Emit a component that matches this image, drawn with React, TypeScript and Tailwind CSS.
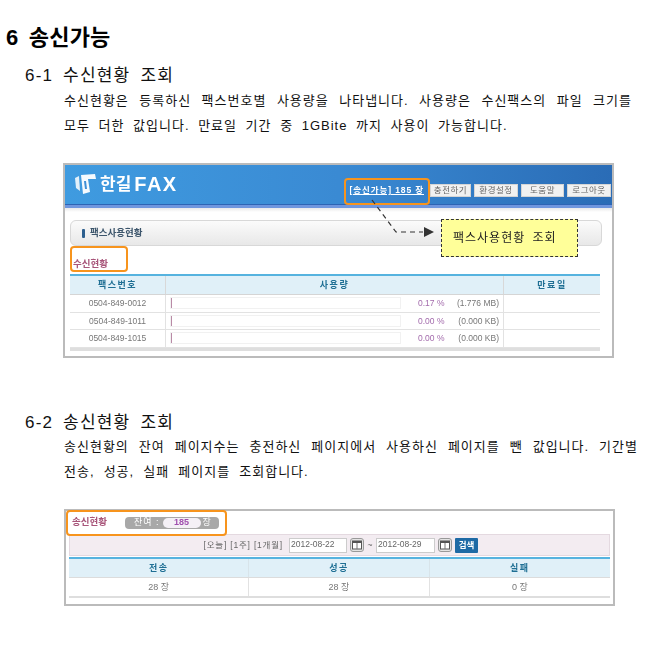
const FONT = "font-['Liberation_Sans','Noto_Sans_CJK_KR',sans-serif]";

const usageRows = [
  { phone: '0504-849-0012', pct: '0.17 %', size: '(1.776 MB)' },
  { phone: '0504-849-1011', pct: '0.00 %', size: '(0.000 KB)' },
  { phone: '0504-849-1015', pct: '0.00 %', size: '(0.000 KB)' },
];

function TopButton({ label, className = '' }: { label: string; className?: string }) {
  return (
    <div className={`h-[13px] bg-[#f1f1f1] border border-[#d5d5d5] flex items-center justify-center text-[8.5px] leading-none text-[#666] tracking-[0.5px] ${className}`}>
      {label}
    </div>
  );
}

function CalendarButton() {
  return (
    <div className="w-[14px] h-[14px] rounded-[3px] border border-[#999] bg-[#e4e4e4] flex items-center justify-center">
      <svg width="10" height="10" viewBox="0 0 10 10">
        <rect x="0.5" y="1" width="9" height="8" fill="#fff" stroke="#555" />
        <rect x="0.5" y="1" width="9" height="2" fill="#555" />
        <path d="M5 3v6" stroke="#777" />
      </svg>
    </div>
  );
}

function Logo() {
  return (
    <div className="flex items-center gap-[3px] text-white">
      <svg width="23" height="22" viewBox="0 0 23 22">
        <path d="M1 5 L5 3 L6 18 L2 15 Z" fill="#fff" opacity="0.85" />
        <path d="M7 2 L21 1 L22 6 L14 6 L16 19 L9 21 Z" fill="#fff" opacity="0.95" />
        <path d="M10 8 L12 8 L13 16 L11 16 Z" fill="#3f8fd6" />
      </svg>
      <span className="text-[17px] font-bold leading-none">한길</span>
      <span className="text-[20px] font-bold leading-none tracking-[1.5px]">FAX</span>
    </div>
  );
}

function ReceiveShot() {
  return (
    <div className="relative ml-[63px] w-[551px] h-[195px] border-[2px] border-[#bbbbbb] bg-white blur-[0.3px]">
      <div className="h-[40px] pt-[19px] pl-[9px] pr-[1px] flex items-start justify-between bg-gradient-to-r from-[#3f9be0] via-[#3a8ad3] to-[#2a6cb6] border-b border-[#2d64b4]">
        <div className="-mt-[11px]"><Logo /></div>
        <div className="flex items-center gap-[3px]">
          <span className="mr-[3px] text-[8.5px] leading-[13px] font-bold text-white underline tracking-[0.9px]">[송신가능] 185 장</span>
          <TopButton label="충전하기" className="w-[41px]" />
          <TopButton label="환경설정" className="w-[44px]" />
          <TopButton label="도움말" className="w-[43px]" />
          <TopButton label="로그아웃" className="w-[44px]" />
        </div>
      </div>
      <div className="h-[3px] bg-[#6f96de]" />
      <div className="h-[4px] bg-gradient-to-b from-[#e9e9e9] to-white" />

      <div className="px-[5px] pt-[8px]">
        <div className="w-[532px] h-[26px] rounded-[6px] border border-[#d8d8d8] bg-gradient-to-b from-[#fbfbfb] to-[#e8e8e8] flex items-center pl-[11px] gap-[5px]">
          <div className="w-[3px] h-[9px] rounded-[1px] bg-[#2d5f8e]" />
          <span className="text-[9.5px] font-bold text-[#3d566c]">팩스사용현황</span>
        </div>
        <div className="h-[28px] pt-[12px] pl-[3px] text-[9.5px] font-bold leading-[12px] text-[#a8557a]">수신현황</div>

        <div className="w-[530px] border-t-[2px] border-[#56b3df] border-b-[3px] border-b-[#dedede] text-[9px]">
          <div className="grid grid-cols-[96px_338px_96px] h-[19px] bg-[#e0f0f8] border-b border-[#d5d5d5] font-bold text-[#1f6f94] text-center leading-[18px] tracking-[1.5px]">
            <div className="border-r border-[#d8d8d8]">팩스번호</div>
            <div className="border-r border-[#d8d8d8]">사용량</div>
            <div>만료일</div>
          </div>
          {usageRows.map((row) => (
            <div key={row.phone} className="grid grid-cols-[96px_338px_96px] h-[17.6px] border-b border-[#e2e2e2] text-[#777] items-stretch">
              <div className="border-r border-[#e2e2e2] flex items-center justify-center text-[8.5px]">{row.phone}</div>
              <div className="border-r border-[#e2e2e2] flex items-center pl-[4px] text-[8.5px]">
                <div className="w-[231px] h-[12px] border border-[#f1f1f1] bg-white">
                  <div className="h-full w-[1px] bg-[#b98aa6]" />
                </div>
                <span className="ml-[17px] text-[#a36bac] whitespace-nowrap">{row.pct}</span>
                <span className="flex-1 pr-[4px] text-right whitespace-nowrap">{row.size}</span>
              </div>
              <div />
            </div>
          ))}
        </div>
      </div>

      {/* 강조 표시 */}
      <div className="absolute left-[279px] top-[13px] w-[86px] h-[27px] rounded-[4px] border-[2px] border-[#f7941d]" />
      <div className="absolute left-[5px] top-[81px] w-[58px] h-[26px] rounded-[4px] border-[2px] border-[#f7941d]" />
      <svg className="absolute left-[300px] top-[32px]" width="80" height="45" viewBox="0 0 80 45">
        <path d="M7 3 L31 35 H58" fill="none" stroke="#333" strokeWidth="1.2" strokeDasharray="5 4" />
        <path d="M59 30 L69 35 L59 40 Z" fill="#333" />
      </svg>
      <div className="absolute left-[376px] top-[54px] w-[137px] h-[38px] border border-dashed border-[#333] bg-[#ffff99] flex items-center pl-[11px] text-[12px] text-[#222] tracking-[1px] [word-spacing:3px]">
        팩스사용현황 조회
      </div>
    </div>
  );
}

function SendShot() {
  return (
    <div className="relative ml-[64px] w-[551px] h-[97px] border-[2px] border-[#bbbbbb] bg-white blur-[0.3px]">
      <div className="h-[23px] pl-[6px] flex items-center gap-[18px]">
        <span className="text-[9.5px] font-bold text-[#a8557a]">송신현황</span>
        <div className="w-[94px] h-[12px] rounded-[4px] bg-[#a8a8a8] flex items-center pl-[9px] text-[9px] text-white">
          <span className="tracking-[1px]">잔여 :</span>
          <span className="ml-[3px] w-[38px] h-[10px] rounded-full bg-[#f4f0f6] flex items-center justify-center text-[9px] leading-none text-[#a04fae] font-bold">185</span>
          <span className="ml-[2px]">장</span>
        </div>
      </div>
      <div className="mx-[3px] h-[22px] bg-[#f3ecf1] border border-[#e4d9e0] flex items-center justify-end pr-[131px] text-[8.5px] text-[#666]">
        <span className="mr-[6px] tracking-[0.8px]">[오늘] [1주] [1개월]</span>
        <div className="w-[58px] h-[15px] bg-white border border-[#ccc] pl-[1px] leading-[11px]">2012-08-22</div>
        <div className="ml-[3px]"><CalendarButton /></div>
        <span className="w-[12px] text-center">~</span>
        <div className="w-[59px] h-[15px] bg-white border border-[#ccc] pl-[1px] leading-[11px]">2012-08-29</div>
        <div className="ml-[3px]"><CalendarButton /></div>
        <div className="ml-[3px] w-[23px] h-[15px] rounded-[1px] bg-[#1e6aa5] flex items-center justify-center font-bold text-white">검색</div>
      </div>
      <div className="mx-[3px] mt-[1px] border-t-[2px] border-[#56b3df] border-b-[2px] border-b-[#dedede] text-[9px]">
        <div className="grid grid-cols-3 h-[19px] bg-[#e0f0f8] border-b border-[#dcdcdc] font-bold text-[#1f6f94] text-center leading-[18px] tracking-[1.5px]">
          <div className="border-r border-[#d8e4ea]">전송</div>
          <div className="border-r border-[#d8e4ea]">성공</div>
          <div>실패</div>
        </div>
        <div className="grid grid-cols-3 h-[18px] text-[#777] text-center leading-[18px]">
          <div className="border-r border-[#e2e2e2]">28 장</div>
          <div className="border-r border-[#e2e2e2]">28 장</div>
          <div>0 장</div>
        </div>
      </div>
      <div className="absolute left-[0px] top-[-1px] w-[161px] h-[26px] rounded-[4px] border-[2px] border-[#f7941d]" />
    </div>
  );
}

export default function App() {
  return (
    <div className={`w-[650px] h-[652px] bg-white overflow-hidden text-[#111] ${FONT}`}>
      <h1 className="pt-[24px] pl-[6px] text-[22px] leading-[28px] font-bold text-black tracking-[0.2px] [word-spacing:4px]">6 송신가능</h1>

      <h2 className="mt-[12px] pl-[25px] text-[17px] leading-[24px] tracking-[1.2px] [word-spacing:4px]">6-1 수신현황 조회</h2>
      <div className="pl-[64px] text-[13px] tracking-[1px]">
        <p className="w-[568px] leading-[25px] [text-align-last:justify]">수신현황은 등록하신 팩스번호별 사용량을 나타냅니다. 사용량은 수신팩스의 파일 크기를</p>
        <p className="leading-[25px] [word-spacing:4px]">모두 더한 값입니다. 만료일 기간 중 1GBite 까지 사용이 가능합니다.</p>
      </div>

      <div className="mt-[25px]">
        <ReceiveShot />
      </div>

      <h2 className="mt-[53px] pl-[25px] text-[17px] leading-[24px] tracking-[1.2px] [word-spacing:4px]">6-2 송신현황 조회</h2>
      <div className="pl-[64px] text-[13px] tracking-[1px]">
        <p className="w-[574px] -mt-[1px] leading-[25px] [text-align-last:justify]">송신현황의 잔여 페이지수는 충전하신 페이지에서 사용하신 페이지를 뺀 값입니다. 기간별</p>
        <p className="leading-[25px] [word-spacing:4.5px]">전송, 성공, 실패 페이지를 조회합니다.</p>
      </div>

      <div className="mt-[25px]">
        <SendShot />
      </div>
    </div>
  );
}
